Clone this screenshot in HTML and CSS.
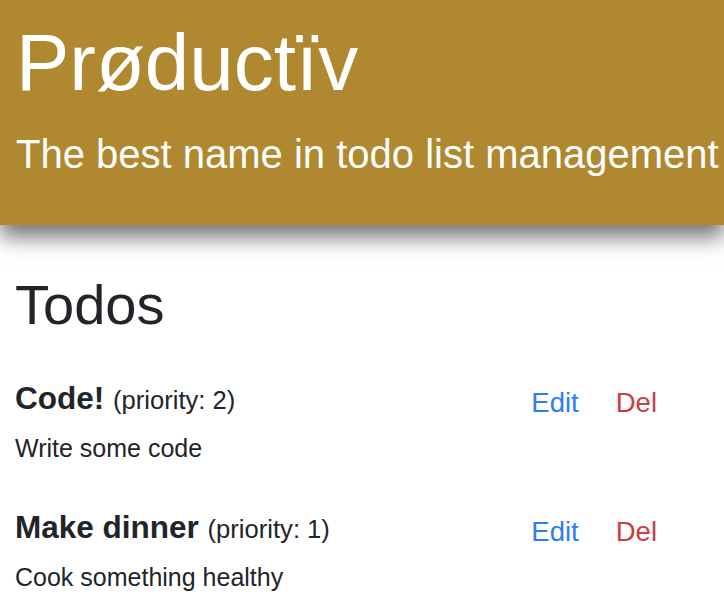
FILE: index.html
```html
<!DOCTYPE html>
<html>
<head>
<meta charset="utf-8">
<title>Prøductïv</title>
<link rel="stylesheet" href="styles.css">
</head>
<body>
<header class="hero">
  <h1 class="brand">Prøductïv</h1>
  <p class="tagline">The best name in todo list management</p>
</header>
<main class="content">
  <h2 class="section-title">Todos</h2>
  <ul class="todo-list">
    <li class="todo">
      <div class="todo-main">
        <h3 class="todo-title">Code! <small class="priority">(priority: 2)</small></h3>
        <p class="todo-desc">Write some code</p>
      </div>
      <div class="todo-actions">
        <a class="action edit" href="#">Edit</a>
        <a class="action del" href="#">Del</a>
      </div>
    </li>
    <li class="todo">
      <div class="todo-main">
        <h3 class="todo-title">Make dinner <small class="priority">(priority: 1)</small></h3>
        <p class="todo-desc">Cook something healthy</p>
      </div>
      <div class="todo-actions">
        <a class="action edit" href="#">Edit</a>
        <a class="action del" href="#">Del</a>
      </div>
    </li>
  </ul>
</main>
</body>
</html>
```
FILE: styles.css
```css
* { box-sizing: border-box; }
html, body { margin: 0; padding: 0; }
body {
  font-family: "Liberation Sans", Arial, sans-serif;
  font-size: 25px;
  color: #212529;
  background: #fff;
  overflow: hidden;
}
.hero {
  background: #b0882f;
  color: #fff;
  padding: 15px 15px 47px 16px;
  box-shadow: 0 12px 20px rgba(0, 0, 0, 0.55);
  position: relative;
  z-index: 1;
}
.brand {
  margin: 0;
  font-size: 80px;
  font-weight: 400;
  line-height: 96px;
}
.tagline {
  margin: 19px 0 0;
  font-size: 40px;
  line-height: 48px;
  white-space: nowrap;
}
.content {
  padding: 0 15px;
}
.section-title {
  margin: 48px 0 0;
  font-size: 56px;
  font-weight: 400;
  line-height: 64px;
}
.todo-list {
  list-style: none;
  margin: 42px 0 0;
  padding: 0;
}
.todo {
  display: flex;
  align-items: flex-start;
  margin-bottom: 42px;
}
.todo:last-child { margin-bottom: 0; }
.todo-main { flex: 1; }
.todo-title {
  margin: 0;
  font-size: 31.5px;
  font-weight: 700;
  line-height: 38px;
}
.priority {
  font-size: 25.6px;
  font-weight: 400;
}
.todo-desc {
  margin: 11px 0 0;
  line-height: 36px;
}
.todo-actions {
  display: flex;
  gap: 37px;
  margin-right: 52px;
  padding-top: 5px;
}
.action {
  font-size: 27.5px;
  line-height: 38px;
  text-decoration: none;
}
.edit { color: #2f7cf6; }
.del { color: #cc3d44; }
```
